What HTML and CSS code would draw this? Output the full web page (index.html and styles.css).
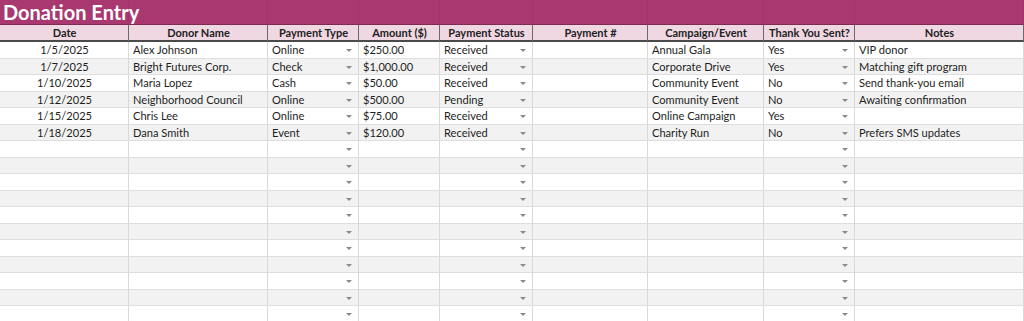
FILE: index.html
```html
<!DOCTYPE html>
<html>
<head>
<meta charset="utf-8">
<link rel="stylesheet" href="styles.css">
</head>
<body>
<div class="sheet">
  <div class="row title-row">
    <div class="cell"><span class="title">Donation Entry</span></div>
    <div class="cell"></div><div class="cell"></div><div class="cell"></div><div class="cell"></div><div class="cell"></div><div class="cell"></div><div class="cell"></div><div class="cell"></div>
  </div>
  <div class="row head-row">
    <div class="cell">Date</div>
    <div class="cell">Donor Name</div>
    <div class="cell">Payment Type</div>
    <div class="cell">Amount ($)</div>
    <div class="cell">Payment Status</div>
    <div class="cell">Payment #</div>
    <div class="cell">Campaign/Event</div>
    <div class="cell">Thank You Sent?</div>
    <div class="cell">Notes</div>
  </div>
  <div class="row">
    <div class="cell c">1/5/2025</div><div class="cell">Alex Johnson</div><div class="cell dd">Online</div><div class="cell">$250.00</div><div class="cell dd">Received</div><div class="cell"></div><div class="cell">Annual Gala</div><div class="cell dd">Yes</div><div class="cell">VIP donor</div>
  </div>
  <div class="row alt">
    <div class="cell c">1/7/2025</div><div class="cell">Bright Futures Corp.</div><div class="cell dd">Check</div><div class="cell">$1,000.00</div><div class="cell dd">Received</div><div class="cell"></div><div class="cell">Corporate Drive</div><div class="cell dd">Yes</div><div class="cell">Matching gift program</div>
  </div>
  <div class="row">
    <div class="cell c">1/10/2025</div><div class="cell">Maria Lopez</div><div class="cell dd">Cash</div><div class="cell">$50.00</div><div class="cell dd">Received</div><div class="cell"></div><div class="cell">Community Event</div><div class="cell dd">No</div><div class="cell">Send thank-you email</div>
  </div>
  <div class="row alt">
    <div class="cell c">1/12/2025</div><div class="cell">Neighborhood Council</div><div class="cell dd">Online</div><div class="cell">$500.00</div><div class="cell dd">Pending</div><div class="cell"></div><div class="cell">Community Event</div><div class="cell dd">No</div><div class="cell">Awaiting confirmation</div>
  </div>
  <div class="row">
    <div class="cell c">1/15/2025</div><div class="cell">Chris Lee</div><div class="cell dd">Online</div><div class="cell">$75.00</div><div class="cell dd">Received</div><div class="cell"></div><div class="cell">Online Campaign</div><div class="cell dd">Yes</div><div class="cell"></div>
  </div>
  <div class="row alt">
    <div class="cell c">1/18/2025</div><div class="cell">Dana Smith</div><div class="cell dd">Event</div><div class="cell">$120.00</div><div class="cell dd">Received</div><div class="cell"></div><div class="cell">Charity Run</div><div class="cell dd">No</div><div class="cell">Prefers SMS updates</div>
  </div>
  <div class="row"><div class="cell"></div><div class="cell"></div><div class="cell dd"></div><div class="cell"></div><div class="cell dd"></div><div class="cell"></div><div class="cell"></div><div class="cell dd"></div><div class="cell"></div></div>
  <div class="row alt"><div class="cell"></div><div class="cell"></div><div class="cell dd"></div><div class="cell"></div><div class="cell dd"></div><div class="cell"></div><div class="cell"></div><div class="cell dd"></div><div class="cell"></div></div>
  <div class="row"><div class="cell"></div><div class="cell"></div><div class="cell dd"></div><div class="cell"></div><div class="cell dd"></div><div class="cell"></div><div class="cell"></div><div class="cell dd"></div><div class="cell"></div></div>
  <div class="row alt"><div class="cell"></div><div class="cell"></div><div class="cell dd"></div><div class="cell"></div><div class="cell dd"></div><div class="cell"></div><div class="cell"></div><div class="cell dd"></div><div class="cell"></div></div>
  <div class="row"><div class="cell"></div><div class="cell"></div><div class="cell dd"></div><div class="cell"></div><div class="cell dd"></div><div class="cell"></div><div class="cell"></div><div class="cell dd"></div><div class="cell"></div></div>
  <div class="row alt"><div class="cell"></div><div class="cell"></div><div class="cell dd"></div><div class="cell"></div><div class="cell dd"></div><div class="cell"></div><div class="cell"></div><div class="cell dd"></div><div class="cell"></div></div>
  <div class="row"><div class="cell"></div><div class="cell"></div><div class="cell dd"></div><div class="cell"></div><div class="cell dd"></div><div class="cell"></div><div class="cell"></div><div class="cell dd"></div><div class="cell"></div></div>
  <div class="row alt"><div class="cell"></div><div class="cell"></div><div class="cell dd"></div><div class="cell"></div><div class="cell dd"></div><div class="cell"></div><div class="cell"></div><div class="cell dd"></div><div class="cell"></div></div>
  <div class="row"><div class="cell"></div><div class="cell"></div><div class="cell dd"></div><div class="cell"></div><div class="cell dd"></div><div class="cell"></div><div class="cell"></div><div class="cell dd"></div><div class="cell"></div></div>
  <div class="row alt"><div class="cell"></div><div class="cell"></div><div class="cell dd"></div><div class="cell"></div><div class="cell dd"></div><div class="cell"></div><div class="cell"></div><div class="cell dd"></div><div class="cell"></div></div>
  <div class="row"><div class="cell"></div><div class="cell"></div><div class="cell dd"></div><div class="cell"></div><div class="cell dd"></div><div class="cell"></div><div class="cell"></div><div class="cell dd"></div><div class="cell"></div></div>
</div>
</body>
</html>
```

FILE: styles.css
```css
html, body {
  margin: 0;
  padding: 0;
  background: #ffffff;
  overflow: hidden;
}
body {
  font-family: Lato, "Open Sans", sans-serif;
  color: #1e1e1e;
}
.sheet {
  width: 1024px;
  height: 321px;
  overflow: hidden;
}
.row {
  display: grid;
  grid-template-columns: 129px 139px 91px 81px 93px 115px 116px 91px 1fr;
  height: 16.5px;
  background: #ffffff;
}
.row.alt {
  background: #f2f2f2;
}
.cell {
  box-sizing: border-box;
  border-right: 1px solid #d9d9d9;
  border-bottom: 1px solid #dedede;
  font-size: 11.1px;
  line-height: 15.5px;
  padding: 0 3px 0 4px;
  white-space: nowrap;
  overflow: visible;
  position: relative;
}
.cell.c {
  text-align: center;
}
.cell.dd::after {
  content: "";
  position: absolute;
  right: 6px;
  top: 7px;
  border-left: 3px solid transparent;
  border-right: 3px solid transparent;
  border-top: 3px solid #8a8a8a;
}
.title-row {
  height: 25px;
  background: #a8386f;
}
.title-row .cell {
  border-right: 1px solid #a0346a;
  border-bottom: 1px solid #7f2a55;
  padding: 0;
}
.title {
  display: block;
  font-weight: 700;
  font-size: 20px;
  line-height: 24px;
  color: #ffffff;
  padding-left: 3px;
}
.head-row {
  height: 17px;
  background: #f0d8e3;
}
.head-row .cell {
  border-right: 1px solid #6b6b6b;
  border-bottom: 2px solid #4a4a4a;
  text-align: center;
  font-weight: 700;
  font-size: 11px;
  line-height: 15px;
  color: #222222;
}
```
